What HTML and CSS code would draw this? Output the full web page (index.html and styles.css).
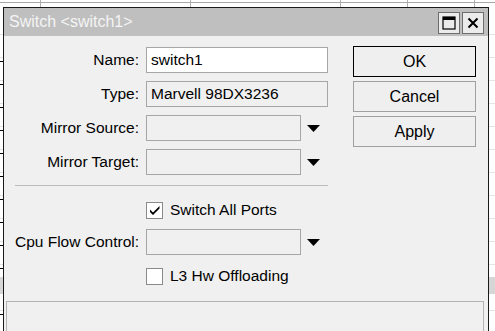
FILE: index.html
```html
<!DOCTYPE html>
<html lang="en">

<head>
    <meta charset="UTF-8" />
    <title>Switch &lt;switch1&gt;</title>
    <link rel="stylesheet" href="styles.css">
</head>

<body>
    <div class="window">
        <div class="titlebar">
            <span class="title">Switch &lt;switch1&gt;</span>
            <div class="title-btns">
                <div class="tbtn">
                    <svg width="14" height="14" viewBox="0 0 14 14">
                        <rect x="1" y="1" width="12" height="12" fill="none" stroke="#000" stroke-width="1.2" />
                        <rect x="1" y="1" width="12" height="3" fill="#000" />
                    </svg>
                </div>
                <div class="tbtn">
                    <svg width="12" height="12" viewBox="0 0 12 12">
                        <path d="M1.5 1.5 L10.5 10.5 M10.5 1.5 L1.5 10.5" stroke="#000" stroke-width="2" />
                    </svg>
                </div>
            </div>
        </div>

        <div class="content">
            <div class="form">
                <div class="row">
                    <span class="label">Name:</span>
                    <div class="field edit">switch1</div>
                </div>
                <div class="row">
                    <span class="label">Type:</span>
                    <div class="field">Marvell 98DX3236</div>
                </div>
                <div class="row">
                    <span class="label">Mirror Source:</span>
                    <div class="combo">
                        <div class="field short"></div>
                        <svg class="arrow" width="13" height="7" viewBox="0 0 13 7"><polygon points="0,0 13,0 6.5,7" fill="#000" /></svg>
                    </div>
                </div>
                <div class="row">
                    <span class="label">Mirror Target:</span>
                    <div class="combo">
                        <div class="field short"></div>
                        <svg class="arrow" width="13" height="7" viewBox="0 0 13 7"><polygon points="0,0 13,0 6.5,7" fill="#000" /></svg>
                    </div>
                </div>

                <div class="sep"></div>

                <div class="row check-row">
                    <span class="label"></span>
                    <div class="check">
                        <span class="box">
                            <svg width="15" height="15" viewBox="0 0 15 15"><path d="M3 6.5 L3 9 L6 12 L12.5 5.5 L12.5 3 L6 9.5 Z" fill="#000" /></svg>
                        </span>
                        Switch All Ports
                    </div>
                </div>
                <div class="row cpu-row">
                    <span class="label">Cpu Flow Control:</span>
                    <div class="combo">
                        <div class="field short"></div>
                        <svg class="arrow" width="13" height="7" viewBox="0 0 13 7"><polygon points="0,0 13,0 6.5,7" fill="#000" /></svg>
                    </div>
                </div>
                <div class="row check-row l3-row">
                    <span class="label"></span>
                    <div class="check">
                        <span class="box"></span>
                        L3 Hw Offloading
                    </div>
                </div>
            </div>

            <div class="actions">
                <div class="btn default">OK</div>
                <div class="btn">Cancel</div>
                <div class="btn">Apply</div>
            </div>
        </div>

        <div class="status"></div>
    </div>
</body>

</html>
```

FILE: styles.css
```css
* {
    box-sizing: border-box;
}

body {
    margin: 0;
    height: 331px;
    overflow: hidden;
    font-family: "Liberation Sans", Arial, sans-serif;
    font-size: 15.5px;
    color: #000;
    background-color: #fff;
    background-image:
        linear-gradient(#a8a8a8, #a8a8a8),
        linear-gradient(#b0b0b0, #b0b0b0),
        linear-gradient(#b0b0b0, #b0b0b0),
        linear-gradient(#b0b0b0, #b0b0b0),
        linear-gradient(#b0b0b0, #b0b0b0),
        linear-gradient(#b0b0b0, #b0b0b0),
        linear-gradient(#d6d6d6, #d6d6d6),
        repeating-linear-gradient(to bottom, transparent 0 22px, #000 22px 23px),
        repeating-linear-gradient(to bottom, transparent 0 22px, #e4e4e4 22px 23px);
    background-size:
        100% 1px,
        1px 8px,
        1px 8px,
        1px 8px,
        1px 8px,
        1px 8px,
        100% 17px,
        3px 100%,
        100% 100%;
    background-position:
        0 2px,
        40px 0,
        190px 0,
        340px 0,
        407px 0,
        474px 0,
        0 277px,
        0 39px,
        0 12px;
    background-repeat: no-repeat;
}

.window {
    margin: 7px 0 0 3px;
    width: 486px;
    height: 340px;
    border: 1px solid #1a1a1a;
    background-color: #f0f0f0;
}

.titlebar {
    height: 28px;
    background-color: #bfbfbf;
    display: flex;
    align-items: flex-start;
    justify-content: space-between;
    padding: 0 4px 0 5px;
}

.title {
    font-size: 16px;
    color: #f4f4f4;
    line-height: 28px;
}

.title-btns {
    display: flex;
    gap: 2px;
    padding-top: 4px;
}

.tbtn {
    width: 22px;
    height: 22px;
    border: 1px solid #6e6e6e;
    background-color: #ebebeb;
    display: flex;
    align-items: center;
    justify-content: center;
}

.content {
    display: flex;
    padding-top: 10px;
}

.form {
    width: 349px;
    padding-top: 1px;
}

.row {
    display: grid;
    grid-template-columns: 135px auto;
    column-gap: 7px;
    align-items: center;
    height: 26px;
    margin-top: 8px;
}

.row:first-child {
    margin-top: 0;
}

.label {
    text-align: right;
    white-space: nowrap;
}

.field {
    width: 182px;
    height: 26px;
    border: 1px solid #a6a6a6;
    padding: 0 4px;
    line-height: 24px;
    white-space: nowrap;
}

.field.edit {
    background-color: #fff;
}

.field.short {
    width: 155px;
}

.combo {
    display: flex;
    align-items: center;
}

.arrow {
    margin-left: 6px;
}

.sep {
    margin: 10px 0 0 11px;
    width: 313px;
    height: 1px;
    background-color: #bcbcbc;
}

.check-row {
    margin-top: 11px;
}

.cpu-row {
    margin-top: 6px;
}

.l3-row {
    margin-top: 8px;
}

.check {
    display: flex;
    align-items: center;
    gap: 7px;
    white-space: nowrap;
}

.box {
    width: 17px;
    height: 17px;
    border: 1px solid #8a8a8a;
    background-color: #fff;
    display: flex;
}

.actions {
    display: flex;
    flex-direction: column;
    gap: 4px;
}

.btn {
    width: 123px;
    height: 31px;
    border: 1px solid #a0a0a0;
    background-color: #efefef;
    text-align: center;
    line-height: 29px;
    font-size: 16px;
}

.btn.default {
    border-color: #000;
}

.status {
    margin: 12px 4px 0 2px;
    height: 40px;
    border: 1px solid #b4b4b4;
}
```
